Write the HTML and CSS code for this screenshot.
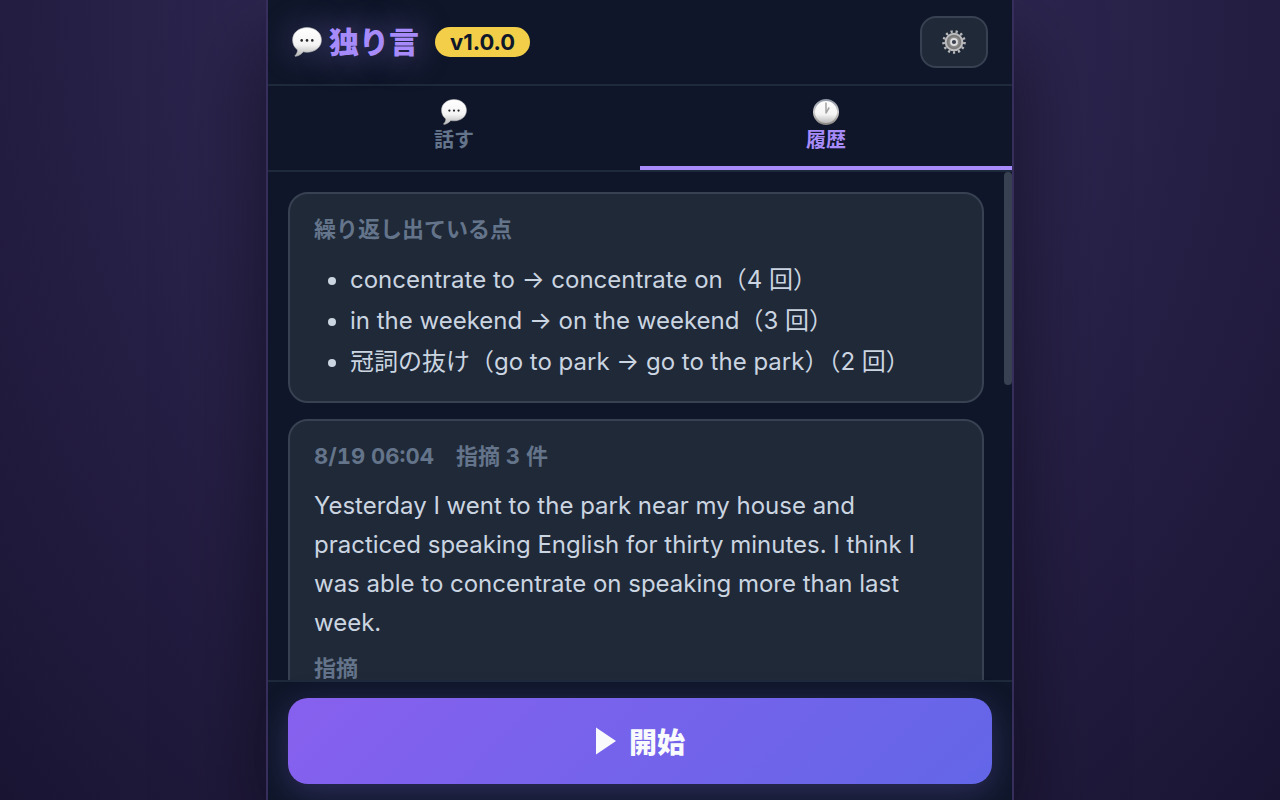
FILE: index.html
```html
<!DOCTYPE html>
<html lang="ja">
<head>
  <meta charset="UTF-8">
  <meta name="viewport" content="width=device-width, initial-scale=1.0">
  <title>独り言</title>
  <link rel="stylesheet" href="styles.css">
</head>
<body>
  <!-- shared icon shapes -->
  <svg class="defs" width="0" height="0" aria-hidden="true">
    <defs>
      <linearGradient id="shade" x1="0" y1="0" x2="0" y2="1">
        <stop offset="0" stop-color="#ffffff"/>
        <stop offset="0.6" stop-color="#f4f4f4"/>
        <stop offset="1" stop-color="#b4b4b4"/>
      </linearGradient>
      <linearGradient id="rim" x1="0" y1="0" x2="0" y2="1">
        <stop offset="0" stop-color="#8f96a5"/>
        <stop offset="0.5" stop-color="#d5d3d2"/>
        <stop offset="1" stop-color="#8b8783"/>
      </linearGradient>
      <symbol id="bubble" viewBox="0 0 30 30">
        <path fill="url(#shade)" stroke="#bdbdbd" stroke-width="0.6" d="M15 .6C23 .6 29.4 5.600 29.400 13S23 25.200 15 25.200c-1.300 0-2.500-.1-3.700-.4-2 2.400-4.600 4.100-7.800 4.500-.6.1-.7-.5-.3-.9 1.500-1.500 2.300-3.200 2.400-5.400C2.500 20.800.6 17.200.6 13 .6 5.600 7 .6 15 .6z"/>
        <circle cx="9.700" cy="13.400" r="1.300" fill="#26262a"/>
        <circle cx="15" cy="13.400" r="1.300" fill="#26262a"/>
        <circle cx="20.300" cy="13.400" r="1.300" fill="#26262a"/>
      </symbol>
    </defs>
  </svg>

  <div class="app">
    <header class="header">
      <h1 class="title">
        <svg class="title-icon" aria-hidden="true"><use href="#bubble"/></svg>
        独り言
      </h1>
      <span class="version">v1.0.0</span>
      <button class="settings" type="button" aria-label="設定">
        <svg width="24" height="24" viewBox="0 0 24 24" aria-hidden="true">
          <circle cx="12" cy="12" r="10.500" fill="none" stroke="#b8b8ba" stroke-width="2.600" stroke-dasharray="2.200 2.875"/>
          <circle cx="12" cy="12" r="8.300" fill="#7b7b7b" stroke="#bcbcbe" stroke-width="2"/>
          <circle cx="12" cy="12" r="5.500" fill="#8c8c8c"/>
          <circle cx="12" cy="12" r="3" fill="#39404c" stroke="#dedee0" stroke-width="1.800"/>
        </svg>
      </button>
    </header>

    <nav class="tabs">
      <button class="tab" type="button">
        <svg class="tab-icon" aria-hidden="true"><use href="#bubble"/></svg>
        <span>話す</span>
      </button>
      <button class="tab active" type="button">
        <svg class="tab-icon" viewBox="0 0 26 26" aria-hidden="true">
          <circle cx="13" cy="13" r="12" fill="url(#shade)" stroke="url(#rim)" stroke-width="2"/>
          <path d="M13 3.500V14l3.200-5.500" fill="none" stroke="#a3a3a3" stroke-width="1.500" stroke-linejoin="round"/>
        </svg>
        <span>履歴</span>
      </button>
    </nav>

    <main class="content">
      <div class="history">
        <section class="card">
          <h2 class="card-title">繰り返し出ている点</h2>
          <ul class="points">
            <li>concentrate to → concentrate on（4 回）</li>
            <li>in the weekend → on the weekend（3 回）</li>
            <li>冠詞の抜け（go to park → go to the park）（2 回）</li>
          </ul>
        </section>
        <section class="card entry">
          <h2 class="card-title">8/19 06:04　指摘 3 件</h2>
          <p class="entry-text">Yesterday I went to the park near my house and practiced speaking English for thirty minutes. I think I was able to concentrate on speaking more than last week.</p>
          <h3 class="card-title">指摘</h3>
        </section>
      </div>
      <div class="scrollbar" aria-hidden="true">
        <div class="thumb"></div>
      </div>
    </main>

    <footer class="footer">
      <button class="start" type="button">
        <svg width="22" height="28" viewBox="0 0 22 28" aria-hidden="true"><path d="M1 0.500L21 14 1 27.500z" fill="currentColor"/></svg>
        開始
      </button>
    </footer>
  </div>
</body>
</html>
```

FILE: styles.css
```css
* {
  box-sizing: border-box;
}

body {
  margin: 0;
  height: 100vh;
  overflow: hidden;
  font-family: Inter, "Noto Sans CJK JP", sans-serif;
  color: #cbd5e1;
  background: radial-gradient(ellipse at top, #393162 0%, #1a1433 100%);
}

button {
  font-family: inherit;
  cursor: pointer;
}

.defs {
  position: absolute;
}

.app {
  display: flex;
  flex-direction: column;
  max-width: 748px;
  height: 100%;
  margin: 0 auto;
  background: #0f1629;
  border: solid #382e5b;
  border-width: 0 2px;
  box-shadow: 0 40px 80px rgba(0, 0, 0, 0.5);
}

/* header */
.header {
  display: flex;
  align-items: center;
  gap: 16px;
  padding: 16px 24px;
  border-bottom: 2px solid #1e293b;
}

.title {
  display: flex;
  align-items: center;
  gap: 7px;
  margin: 0;
  font-size: 30px;
  line-height: 36px;
  font-weight: 800;
  color: #a78bfa;
  text-shadow: 0 0 32px rgba(167, 139, 250, 0.5);
}

.title-icon {
  width: 30px;
  height: 30px;
  filter: drop-shadow(0 0 16px rgba(167, 139, 250, 0.3));
}

.version {
  padding: 0 15px;
  font-size: 22px;
  line-height: 30px;
  font-weight: 700;
  color: #0f172a;
  background: #f3ce49;
  border-radius: 15px;
}

.settings {
  display: flex;
  align-items: center;
  justify-content: center;
  width: 68px;
  height: 52px;
  margin-left: auto;
  padding: 0;
  background: #1f2937;
  border: 2px solid #374151;
  border-radius: 16px;
}

/* tabs */
.tabs {
  display: flex;
  border-bottom: 2px solid #1e293b;
}

.tab {
  display: flex;
  flex: 1;
  flex-direction: column;
  align-items: center;
  gap: 2px;
  padding: 13px 0 12px;
  font-size: 20px;
  line-height: 27px;
  font-weight: 700;
  color: #64748b;
  background: none;
  border: 0;
  border-bottom: 4px solid transparent;
}

.tab.active {
  color: #a78bfa;
  border-bottom-color: #a78bfa;
}

.tab-icon {
  width: 26px;
  height: 26px;
}

/* history list */
.content {
  display: flex;
  flex: 1;
  min-height: 0;
}

.history {
  flex: 1;
  padding: 20px;
  overflow: hidden;
}

.scrollbar {
  width: 8px;
}

.thumb {
  height: 42%;
  background: #374151;
  border-radius: 4px;
}

.card {
  padding: 17px 24px 19px;
  background: #1f2937;
  border: 2px solid #374151;
  border-radius: 20px;
}

.card + .card {
  margin-top: 16px;
}

.card-title {
  margin: 0 0 12px;
  font-size: 22px;
  line-height: 36px;
  font-weight: 700;
  font-variant-numeric: tabular-nums;
  color: #64748b;
}

.points {
  margin: 0;
  padding-left: 36px;
  font-size: 24px;
  line-height: 41px;
}

.entry {
  min-height: 400px;
}

.entry-text {
  margin: 0 0 8px;
  font-size: 24px;
  line-height: 39px;
}

/* footer */
.footer {
  padding: 16px 20px;
  border-top: 2px solid #1e293b;
}

.start {
  display: flex;
  align-items: center;
  justify-content: center;
  gap: 12px;
  width: 100%;
  height: 86px;
  padding: 0;
  font-size: 28px;
  font-weight: 800;
  color: #f8fafc;
  background: linear-gradient(135deg, #8760ee, #6366e8);
  border: 0;
  border-radius: 20px;
  box-shadow: 0 8px 32px rgba(139, 120, 246, 0.25);
}
```
